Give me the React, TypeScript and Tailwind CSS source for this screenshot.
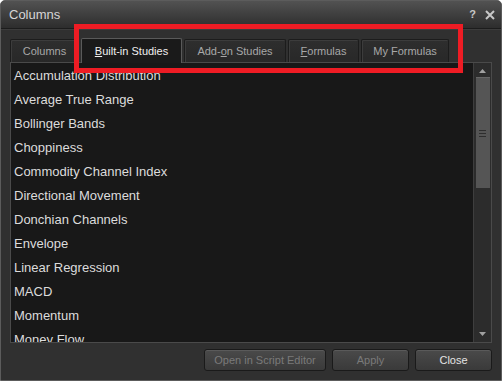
import React from "react";

const studies = [
  "Accumulation Distribution",
  "Average True Range",
  "Bollinger Bands",
  "Choppiness",
  "Commodity Channel Index",
  "Directional Movement",
  "Donchian Channels",
  "Envelope",
  "Linear Regression",
  "MACD",
  "Momentum",
  "Money Flow",
];

function Tab({ label, active, width }: { label: React.ReactNode; active?: boolean; width: string }) {
  if (active) {
    return (
      <div
        className={`${width} h-[25px] -mb-px relative z-10 flex items-center justify-center bg-[#1a1a1a] border border-b-0 border-[#5a5a5a] rounded-t-[2px] text-[11px] text-[#f0f0f0]`}
      >
        {label}
      </div>
    );
  }
  return (
    <div
      className={`${width} h-[23px] flex items-center justify-center bg-gradient-to-b from-[#2e2e2e] to-[#282828] border border-b-0 border-[#1c1c1c] shadow-[inset_1px_1px_0_#3c3c3c] rounded-t-[2px] text-[11px] text-[#a8a8a8]`}
    >
      {label}
    </div>
  );
}

function Button({ label, disabled, width }: { label: string; disabled?: boolean; width: string }) {
  return (
    <div
      className={`${width} h-[22px] flex items-center justify-center rounded-[3px] border border-[#1a1a1a] bg-gradient-to-b from-[#4a4a4a] to-[#3a3a3a] shadow-[inset_0_1px_0_#5a5a5a] text-[11px] ${disabled ? "text-[#7a7a7a]" : "text-[#e4e4e4]"}`}
    >
      {label}
    </div>
  );
}

export default function App() {
  return (
    <div
      className="relative w-[502px] h-[381px] flex flex-col bg-[#303030] border border-[#5c5c5c] rounded-t-[5px] overflow-hidden"
      style={{ fontFamily: '"Liberation Sans", Arial, sans-serif' }}
    >
      {/* Title bar */}
      <div className="h-[28px] flex items-center justify-between pl-[8px] pr-[6px] bg-gradient-to-b from-[#525252] to-[#2d2d2d] border-b border-[#1c1c1c]">
        <span className="text-[13px] text-[#d6d6d6]">Columns</span>
        <div className="flex items-center gap-[9px] text-[#c8c8c8] font-bold">
          <span className="text-[11px]">?</span>
          <svg width="10" height="10" viewBox="0 0 10 10">
            <path d="M1 1L9 9M9 1L1 9" stroke="#c8c8c8" strokeWidth="2" />
          </svg>
        </div>
      </div>
      <div className="h-px bg-[#3c3c3c]" />

      {/* Body */}
      <div className="flex-1 flex flex-col px-[9px] pt-[8px]">
        <div className="flex items-end gap-[2px] h-[24px]">
          <Tab width="w-[69px]" label="Columns" />
          <Tab width="w-[101px]" active label={<><span className="underline">B</span>uilt-in Studies</>} />
          <Tab width="w-[102px]" label={<>Add-<span className="underline">o</span>n Studies</>} />
          <Tab width="w-[71px]" label={<><span className="underline">F</span>ormulas</>} />
          <Tab width="w-[88px]" label="My Formulas" />
        </div>

        {/* List */}
        <div className="h-[281px] flex bg-[#181818] border border-[#4a4a4a] overflow-hidden">
          <div className="flex-1 flex flex-col pl-[3px] pt-px overflow-hidden">
            {studies.map((s) => (
              <div key={s} className="h-[24px] shrink-0 flex items-center text-[13px] text-[#dcdcdc]">
                {s}
              </div>
            ))}
          </div>
          <div className="w-[18px] flex flex-col items-center bg-[#2c2c2c] border-l border-[#3e3e3e]">
            <svg className="mt-[6px]" width="7" height="4" viewBox="0 0 7 4">
              <path d="M3.5 0L7 4H0z" fill="#a0a0a0" />
            </svg>
            <div className="mt-[4px] w-[14px] h-[111px] flex flex-col items-center justify-center gap-[2px] bg-[#555555] border-t border-[#666666]">
              <div className="w-[7px] h-px bg-[#2e2e2e]" />
              <div className="w-[7px] h-px bg-[#2e2e2e]" />
              <div className="w-[7px] h-px bg-[#2e2e2e]" />
            </div>
            <div className="flex-1" />
            <svg className="mb-[6px]" width="7" height="4" viewBox="0 0 7 4">
              <path d="M0 0H7L3.5 4z" fill="#a0a0a0" />
            </svg>
          </div>
        </div>

        {/* Buttons */}
        <div className="flex justify-end gap-[6px] mt-[6px]">
          <Button width="w-[122px]" label="Open in Script Editor" disabled />
          <Button width="w-[77px]" label="Apply" disabled />
          <Button width="w-[77px]" label="Close" />
        </div>
      </div>

      {/* Highlight annotation */}
      <div className="absolute left-[73px] top-[23px] w-[389px] h-[49px] border-[5px] border-[#ee1c24] pointer-events-none" />
    </div>
  );
}
